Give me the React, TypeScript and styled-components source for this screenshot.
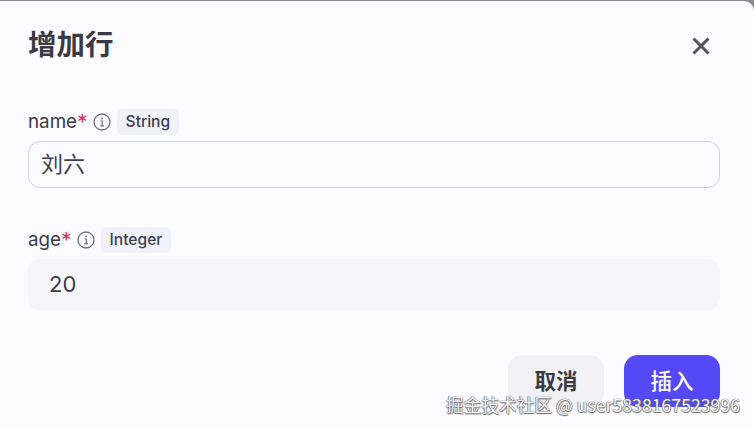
import styled, { createGlobalStyle } from "styled-components";

const Global = createGlobalStyle`
  html, body {
    margin: 0;
    padding: 0;
    background: #8c8c8c;
  }
  body {
    font-family: "Inter", "Noto Sans CJK SC", sans-serif;
    overflow: hidden;
  }
`

const Page = styled.div`
  position: relative;
  width: 754px;
  height: 428px;
  overflow: hidden;
`

const Dialog = styled.div`
  box-sizing: border-box;
  width: 754px;
  height: 427px;
  margin-top: 1px;
  padding: 0 34px 0 28px;
  background: #fcfbff;
  border-radius: 0 10px 0 0;
  color: #3a3a45;
`

const Header = styled.div`
  display: flex;
  align-items: flex-start;
  justify-content: space-between;
  height: 108px;
  padding-top: 22px;
  box-sizing: border-box;
`

const Title = styled.h1`
  margin: 0;
  font-size: 28.5px;
  line-height: 40px;
  font-weight: 700;
  font-family: "Noto Sans CJK SC", sans-serif;
  color: #3a3a45;
`

const CloseButton = styled.div`
  display: flex;
  width: 22px;
  height: 22px;
  margin: 12px 8px 0 0;
  color: #55555f;
`

const Field = styled.div<{ $gap: number }>`
  margin-bottom: ${(p) => p.$gap}px;
`

const LabelRow = styled.div`
  display: flex;
  align-items: center;
  height: 26px;
  margin-bottom: 6px;
`

const LabelText = styled.span`
  font-size: 18.8px;
  line-height: 26px;
  color: #3c3c47;
`

const Star = styled.span`
  font-size: 21px;
  line-height: 0;
  vertical-align: -2px;
  color: #d0354f;
`

const Info = styled.svg`
  width: 18px;
  height: 18px;
  margin: 0 6px 0 5px;
  color: #6f6f78;
`

const Chip = styled.span`
  height: 26px;
  padding: 0 9px;
  border-radius: 6px;
  background: #f1f2f9;
  font-size: 15.6px;
  line-height: 25px;
  font-weight: 500;
  color: #3d3f52;
`

const NameInput = styled.div`
  box-sizing: border-box;
  height: 47px;
  padding-left: 12px;
  border: 1px solid #cfcfd6;
  border-radius: 12px;
  font-family: "Noto Sans CJK SC", sans-serif;
  font-size: 22px;
  line-height: 41px;
  color: #3f3f49;
`

const NumberInput = styled.div`
  height: 51px;
  padding-left: 21px;
  border-radius: 12px;
  background: #f6f6fa;
  font-size: 22px;
  line-height: 51px;
  color: #3f3f49;
`

const Footer = styled.div`
  display: flex;
  justify-content: flex-end;
  gap: 20px;
`

const Button = styled.div<{ $primary?: boolean }>`
  width: 96px;
  height: 52px;
  border-radius: 14px;
  text-align: center;
  font-family: "Noto Sans CJK SC", sans-serif;
  font-size: 21.5px;
  line-height: 49px;
  font-weight: ${(p) => (p.$primary ? 500 : 700)};
  background: ${(p) => (p.$primary ? "#5549f6" : "#f2f2f6")};
  color: ${(p) => (p.$primary ? "#ffffff" : "#3a3a45")};
`

const Watermark = styled.div`
  position: absolute;
  left: 446px;
  top: 392px;
  font-family: "Noto Sans CJK SC", sans-serif;
  font-size: 17.7px;
  line-height: 24px;
  white-space: nowrap;
  color: #f4f4f4;
  text-shadow: 0 0 1px #666, 0.5px 0.5px 1px #666, -0.5px -0.5px 1px #666;
`

function InfoIcon() {
  return (
    <Info viewBox="0 0 18 18" fill="none" stroke="currentColor">
      <circle cx="9" cy="9" r="8" strokeWidth="1.3" />
      <path d="M7.6 8h1.6v4.6M7.4 12.8h3.4" strokeWidth="1.2" />
      <circle cx="9" cy="5.5" r="0.9" fill="currentColor" stroke="none" />
    </Info>
  )
}

export default function App() {
  return (
    <Page>
      <Global />
      <Dialog>
        <Header>
          <Title>增加行</Title>
          <CloseButton>
            <svg viewBox="0 0 22 22" width="22" height="22" fill="none" stroke="currentColor" strokeWidth="3">
              <path d="M3.5 3.5l15 15M18.5 3.5l-15 15" />
            </svg>
          </CloseButton>
        </Header>
        <Field $gap={39}>
          <LabelRow>
            <LabelText>name<Star>*</Star></LabelText>
            <InfoIcon />
            <Chip>String</Chip>
          </LabelRow>
          <NameInput>刘六</NameInput>
        </Field>
        <Field $gap={45}>
          <LabelRow>
            <LabelText>age<Star>*</Star></LabelText>
            <InfoIcon />
            <Chip>Integer</Chip>
          </LabelRow>
          <NumberInput>20</NumberInput>
        </Field>
        <Footer>
          <Button>取消</Button>
          <Button $primary>插入</Button>
        </Footer>
      </Dialog>
      <Watermark>掘金技术社区 @ user5838167523996</Watermark>
    </Page>
  )
}
